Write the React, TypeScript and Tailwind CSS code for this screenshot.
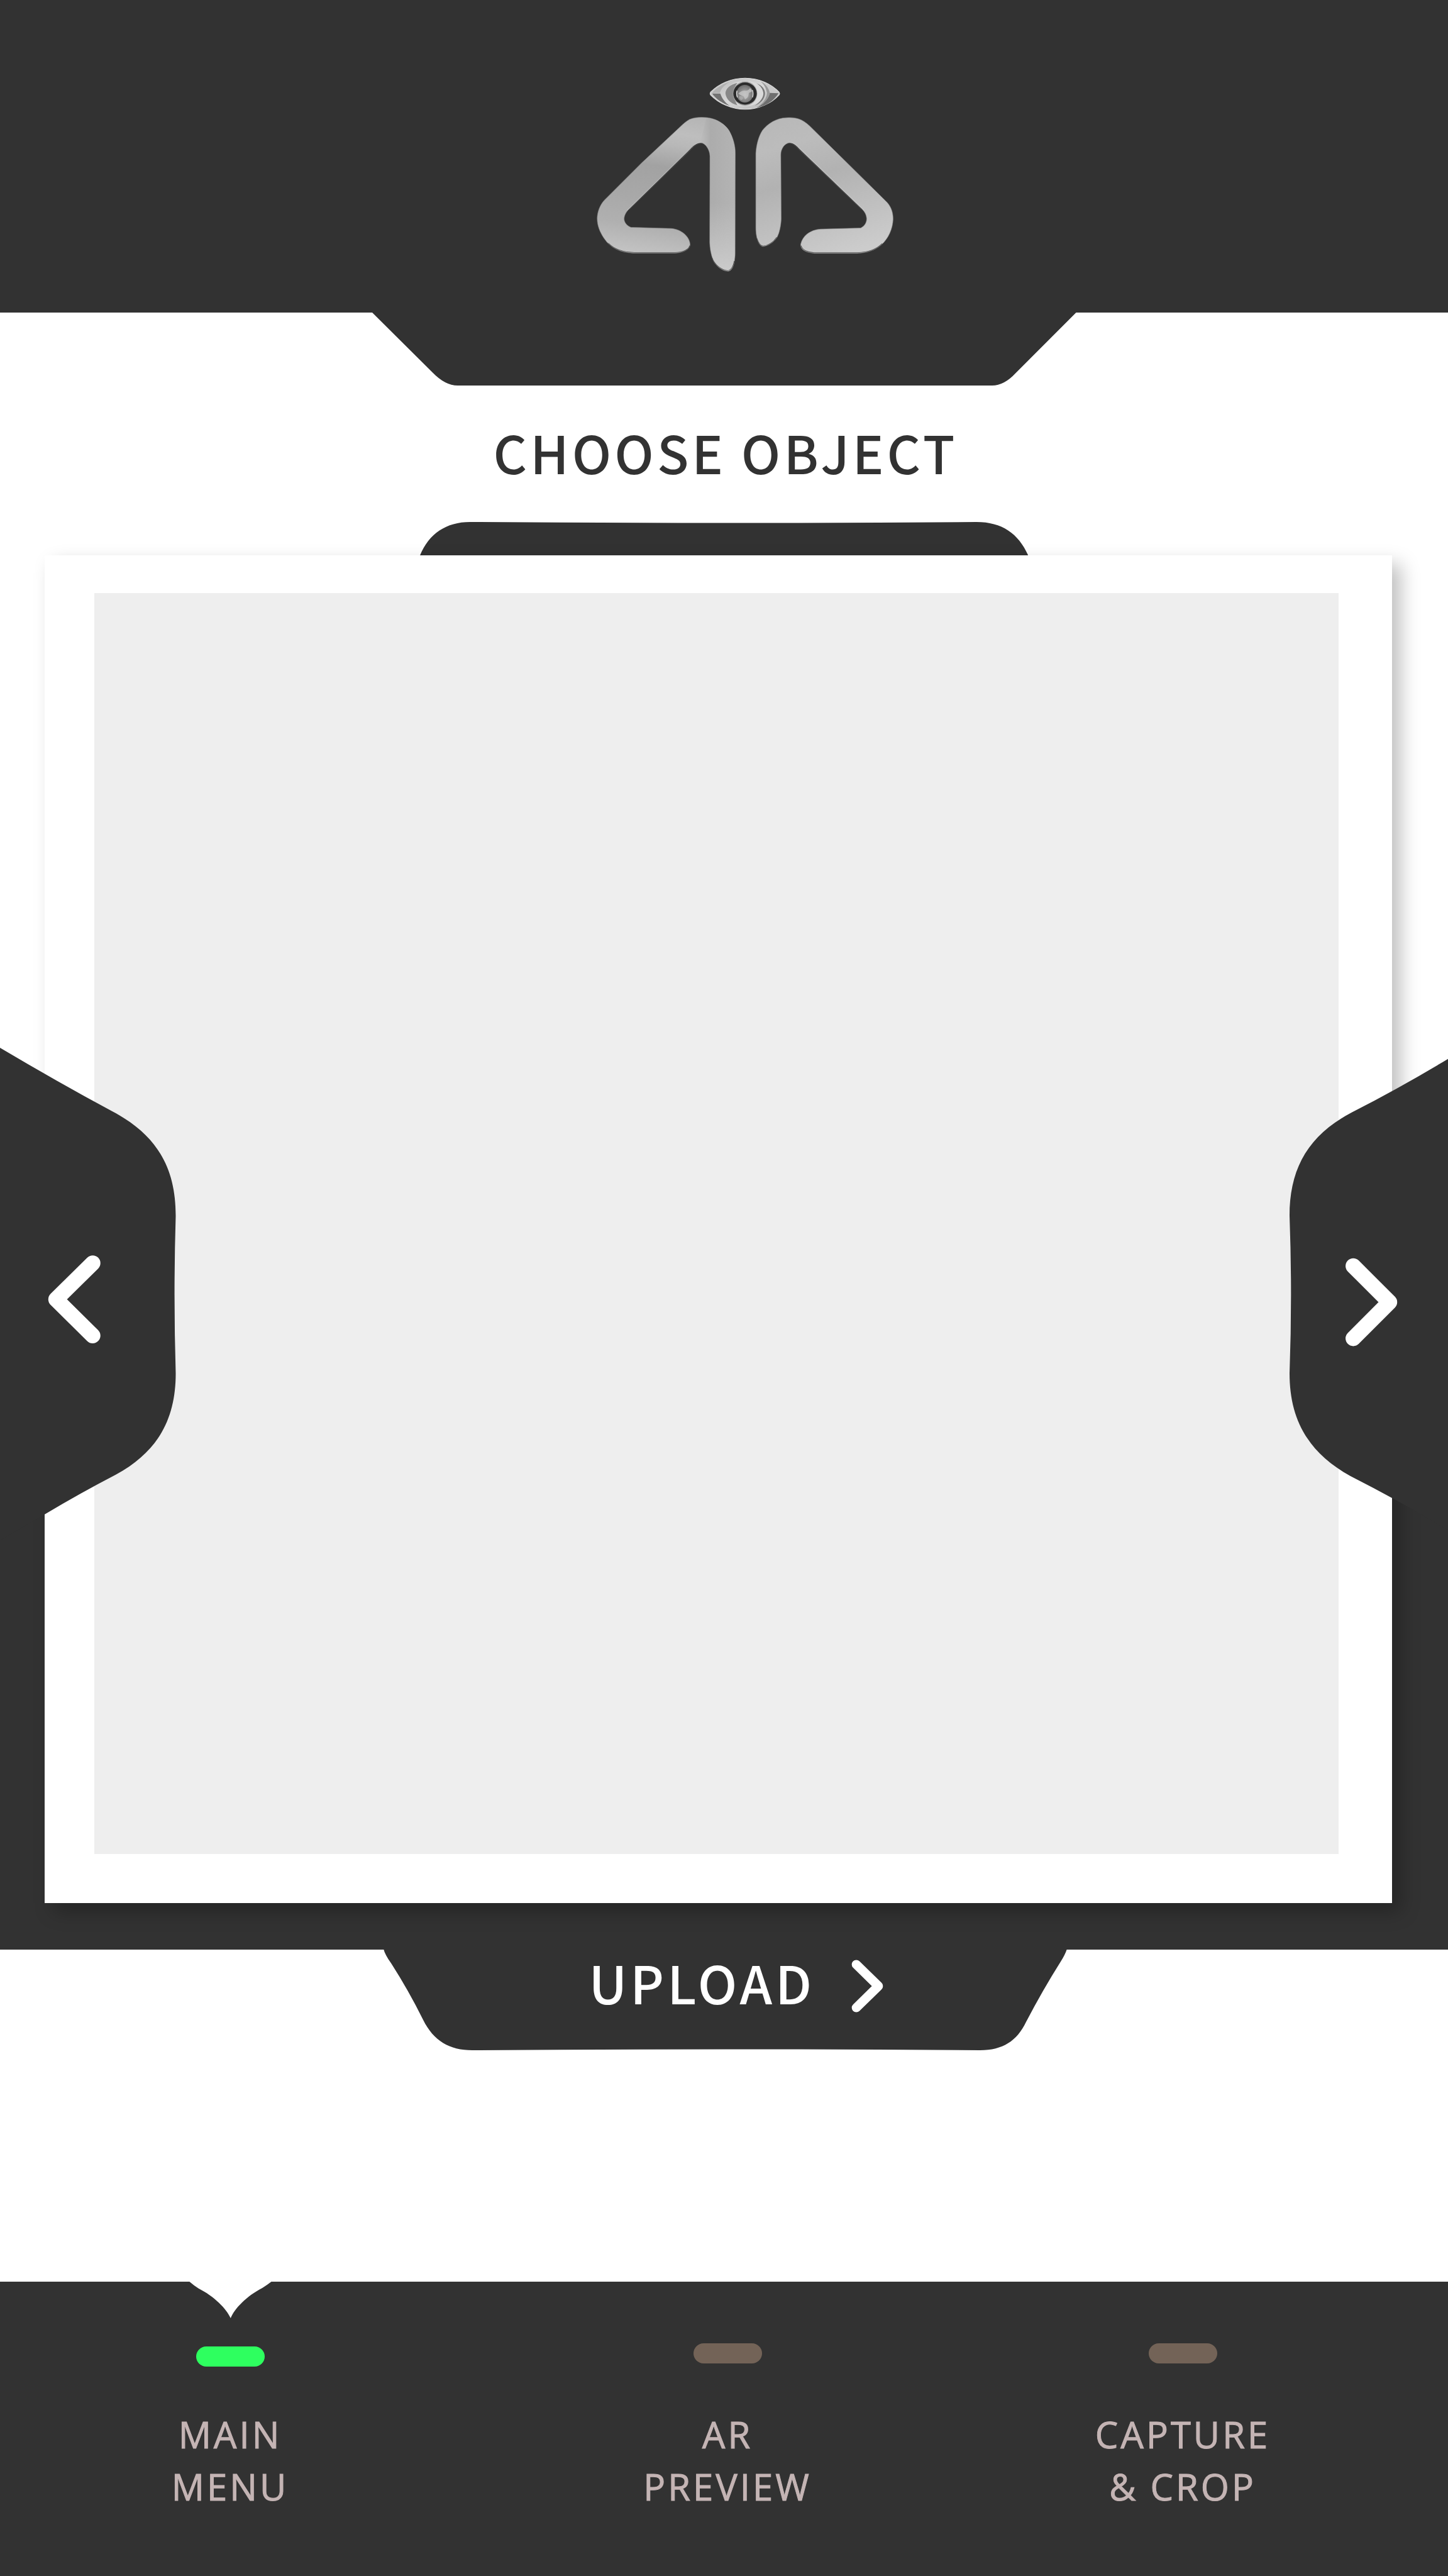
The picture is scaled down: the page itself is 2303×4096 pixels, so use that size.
import React from "react";

const NAV_ITEMS = [
  { lines: ["MAIN", "MENU"], active: true },
  { lines: ["AR", "PREVIEW"], active: false },
  { lines: ["CAPTURE", "& CROP"], active: false },
];

function Logo() {
  return (
    <svg viewBox="36 40 616 402" className="h-[309px] w-[473px] shrink-0" role="img" aria-label="Logo">
      <defs>
        <linearGradient id="left-arm" gradientUnits="userSpaceOnUse" x1="600" y1="370" x2="420" y2="1250">
          <stop offset="0" stopColor="#b4b4b4" />
          <stop offset="0.14" stopColor="#bebebe" />
          <stop offset="0.22" stopColor="#b8b8b8" />
          <stop offset="0.38" stopColor="#a2a2a2" />
          <stop offset="0.6" stopColor="#a8a8a8" />
          <stop offset="0.8" stopColor="#b0b0b0" />
          <stop offset="1" stopColor="#c4c4c4" />
        </linearGradient>
        <linearGradient id="left-stem" gradientUnits="userSpaceOnUse" x1="560" y1="0" x2="724" y2="0">
          <stop offset="0" stopColor="#b0b0b0" stopOpacity="0" />
          <stop offset="0.3" stopColor="#acacac" />
          <stop offset="1" stopColor="#b4b4b4" />
        </linearGradient>
        <linearGradient id="stem-tip" gradientUnits="userSpaceOnUse" x1="0" y1="900" x2="0" y2="1320">
          <stop offset="0" stopColor="#c8c8c8" stopOpacity="0" />
          <stop offset="1" stopColor="#cbcbcb" />
        </linearGradient>
        <linearGradient id="right-arm" gradientUnits="userSpaceOnUse" x1="900" y1="370" x2="1240" y2="1210">
          <stop offset="0" stopColor="#b8b8b8" />
          <stop offset="0.2" stopColor="#bcbcbc" />
          <stop offset="0.45" stopColor="#b2b2b2" />
          <stop offset="0.75" stopColor="#c0c0c0" />
          <stop offset="1" stopColor="#cccccc" />
        </linearGradient>
        <linearGradient id="lid" x1="0" y1="0" x2="1" y2="1">
          <stop offset="0" stopColor="#b8b8b8" />
          <stop offset="0.5" stopColor="#d8d8d8" />
          <stop offset="1" stopColor="#b0b0b0" />
        </linearGradient>
        <radialGradient id="iris" cx="0.5" cy="0.55" r="0.55">
          <stop offset="0" stopColor="#c0c0c0" />
          <stop offset="0.5" stopColor="#929292" />
          <stop offset="1" stopColor="#6c6c6c" />
        </radialGradient>
      </defs>

      <g transform="scale(0.44643 0.33333)" stroke="#8a8a8a" strokeWidth="2">
        <path
          fill="url(#left-arm)"
          d="M512 380 C545 362 590 366 618 376 C655 390 685 425 697 455 C712 492 724 540 724 590 L723 1215 C722 1265 714 1324 688 1324 C660 1320 630 1288 620 1252 C610 1215 606 1180 605 1145 L606 610 C606 570 585 526 562 526 C545 526 525 546 512 568 L232 936 C215 958 208 980 208 1000 C209 1022 222 1042 240 1051 L425 1058 C475 1062 514 1112 514 1160 C512 1190 480 1210 445 1211 L250 1211 C190 1208 145 1180 115 1120 C95 1080 83 1040 83 995 C84 955 95 915 115 884 L290 650 L470 424 C485 405 498 390 512 380 Z"
        />
        <path
          stroke="none"
          fill="url(#left-stem)"
          d="M590 370 C655 382 685 425 697 455 C712 492 722 540 722 590 L721 1215 C720 1265 712 1320 688 1320 C660 1316 630 1284 621 1250 C612 1215 608 1180 607 1145 L608 610 C606 560 585 528 562 524 Z"
        />
        <path
          stroke="none"
          fill="url(#stem-tip)"
          d="M607 900 L722 900 L721 1215 C720 1265 712 1320 688 1320 C660 1316 630 1284 621 1250 C612 1215 608 1180 607 1145 Z"
        />
        <path
          fill="url(#right-arm)"
          d="M850 448 C875 405 915 372 960 370 C1010 366 1035 380 1068 420 L1420 885 C1445 915 1456 955 1456 1000 C1454 1060 1435 1120 1400 1162 C1370 1195 1335 1210 1290 1212 L1090 1212 C1050 1208 1026 1190 1027 1158 C1035 1105 1070 1066 1120 1062 L1306 1055 C1325 1042 1334 1020 1333 995 C1332 975 1325 955 1312 938 L1018 560 C1005 540 992 526 977 526 C952 528 935 565 935 600 L937 1000 C935 1040 930 1080 918 1112 C905 1142 875 1168 852 1170 C830 1166 820 1110 819 1060 L819 590 C822 535 832 485 850 448 Z"
        />
        <path fill="none" stroke="#4a4a4a" strokeWidth="3" d="M232 940 L515 572 C530 546 548 530 564 530 M1310 940 L1018 566 C1005 545 992 530 977 530" />
        <path fill="none" stroke="#dcdcdc" strokeWidth="2" d="M222 946 L508 572 C525 548 545 523 564 523 M1322 946 L1022 560 C1008 540 992 523 977 523" />
        <path fill="none" stroke="#4c4c4c" strokeWidth="3" d="M135 1150 C165 1190 205 1206 255 1207 L445 1207 C480 1206 508 1190 512 1165 M1029 1165 C1034 1192 1060 1207 1090 1208 L1290 1208 C1345 1204 1378 1188 1405 1152 M616 1240 C628 1285 660 1316 688 1320 C704 1318 714 1295 719 1260 M824 1120 C832 1152 840 1166 853 1167 C875 1165 900 1145 916 1112" />
      </g>

      <g transform="translate(240 20) scale(0.33333)">
        <path fill="url(#lid)" stroke="#dedede" strokeWidth="4" d="M95 152 C145 100 225 64 310 64 C395 64 475 100 522 152 Q528 160 522 168 C475 220 395 258 310 258 C225 258 145 220 95 168 Q90 160 95 152 Z" />
        <path fill="#727272" d="M105 160 L156 160 C166 190 188 220 215 236 C170 222 130 195 105 160 Z" />
        <path fill="#b0b0b0" d="M105 156 C135 122 180 98 215 88 C180 108 160 130 154 156 Z" />
        <path fill="#6e6e6e" d="M518 158 L464 156 C454 195 425 228 380 248 C440 238 490 205 518 158 Z" />
        <path fill="#c8c8c8" d="M518 153 L464 153 C458 125 435 98 405 84 C450 96 492 122 518 153 Z" />
        <path fill="#999999" d="M405 84 C435 98 458 125 464 156 C454 195 425 228 380 248 C420 225 445 190 446 156 C440 125 428 102 405 84 Z" />
        <ellipse cx="310" cy="160" rx="122" ry="78" fill="#dadada" />
        <path fill="#888888" d="M262 94 C215 105 190 130 188 158 C192 195 220 222 262 232 C235 190 232 130 262 94 Z" />
        <path fill="#777777" d="M380 96 C415 110 434 132 434 160 C432 195 405 222 370 236 C400 215 423 190 424 160 C423 135 405 110 380 96 Z" />
        <ellipse cx="310" cy="160" rx="76" ry="76" fill="#a8a8a8" />
        <ellipse cx="310" cy="160" rx="73" ry="69" fill="#2b2b2b" />
        <ellipse cx="309" cy="161" rx="52" ry="55" fill="url(#iris)" />
        <path fill="#c6c6c6" d="M268 160 Q290 138 316 142 Q336 140 340 126 Q358 138 350 150 Q330 152 332 166 Q330 186 310 196 L302 178 Q282 172 268 160 Z" opacity="0.8" />
        <path fill="#b0b0b0" d="M272 180 Q288 168 298 186 Q296 200 284 200 Q272 194 272 180 Z" opacity="0.7" />
        <path fill="none" stroke="#e2e2e2" strokeWidth="5" d="M260 142 Q254 162 262 184 M356 138 Q364 162 356 184" />
      </g>
    </svg>
  );
}

function Header() {
  return (
    <header>
      <div className="flex h-[497px] items-start justify-center bg-[#323232] pt-[123px] pl-[68px]">
        <Logo />
      </div>
      <svg viewBox="770 648 1458 152" className="mx-auto -mt-px block h-auto w-[48.7%] fill-[#323232]" aria-hidden="true">
        <path d="M770 648 H2228 L2102 774 Q2078 800 2053 800 H948 Q922 800 896 773 Z" />
      </svg>
    </header>
  );
}

function PreviousButton() {
  return (
    <button type="button" aria-label="Previous object" className="absolute top-[783px] left-0 w-[12.17%]">
      <svg viewBox="0 2170 365 1020" className="block h-auto w-full">
        <path
          fill="#323232"
          d="M0 2170 Q118 2240 233 2302 C328 2352 364 2422 364 2518 Q359 2681 364 2844 C364 2938 328 3006 240 3054 Q165 3093 93 3136 L0 3190 Z"
        />
        <path d="M192 2616 L116 2691 L192 2766" fill="none" stroke="white" strokeWidth="32" strokeLinecap="round" strokeLinejoin="round" />
      </svg>
    </button>
  );
}

function NextButton() {
  return (
    <button type="button" aria-label="Next object" className="absolute top-[783px] -right-px w-[11%]">
      <svg viewBox="2671 2170 330 1020" className="block h-auto w-full">
        <path
          fill="#323232"
          d="M3001 2192 Q2905 2250 2800 2304 C2708 2352 2671 2422 2671 2518 Q2677 2681 2671 2844 C2671 2938 2708 3008 2797 3057 Q2905 3112 3001 3170 Z"
        />
        <path d="M2803 2622 L2878 2697 L2803 2772" fill="none" stroke="white" strokeWidth="32" strokeLinecap="round" strokeLinejoin="round" />
      </svg>
    </button>
  );
}

function ObjectPicker() {
  return (
    <main className="pb-[368px]">
      <h1 className="flex h-[217px] items-center justify-center pb-[5px] pl-[5px] font-['Noto_Sans_CJK_SC',sans-serif] text-[83px] leading-none font-medium tracking-[5px] text-[#323232]">
        CHOOSE OBJECT
      </h1>
      <svg viewBox="871 1081 1261 69" className="mx-auto block h-auto w-[42%] fill-[#323232]" aria-hidden="true">
        <path d="M871 1150 C890 1105 925 1081 975 1081 Q1500 1085 2025 1081 C2078 1081 2112 1105 2132 1150 Z" />
      </svg>
      <section aria-label="Object preview" className="relative pr-[89px] pb-[74px] pl-[71px]">
        <div className="absolute inset-x-0 bottom-0 h-[34%] bg-[#323232]" />
        <div className="relative flex aspect-square bg-white pt-[60px] pr-[85px] pb-[78px] pl-[79px] shadow-[14px_14px_28px_rgba(0,0,0,0.25)]">
          <div className="flex-1 bg-[#eeeeee]" />
        </div>
        <PreviousButton />
        <NextButton />
      </section>
      <button
        type="button"
        className="relative -mt-px ml-[26.5%] flex h-[161px] w-[47.2%] items-start justify-center gap-[58px] pt-[10px] pl-[34px] font-['Noto_Sans_CJK_SC',sans-serif] text-[83px] leading-[84px] font-medium tracking-[5px] text-white"
      >
        <svg viewBox="794 4038 1417 209" preserveAspectRatio="none" className="absolute inset-0 size-full fill-[#323232]" aria-hidden="true">
          <path d="M794 4038 H2211 Q2207 4050 2198 4064 Q2160 4124 2126 4189 C2107 4228 2078 4247 2031 4247 Q1500 4243 978 4247 C931 4247 898 4228 876 4184 Q846 4124 810 4068 Q797 4050 794 4038 Z" />
        </svg>
        <span className="relative">UPLOAD</span>
        <svg viewBox="1763 4059 66 110" className="relative mt-[7px] h-[84px] w-[51px]" aria-hidden="true">
          <path d="M1773 4069 L1819 4114 L1773 4159" fill="none" stroke="white" strokeWidth="19" strokeLinecap="round" strokeLinejoin="round" />
        </svg>
      </button>
    </main>
  );
}

function Footer() {
  return (
    <footer className="grow bg-[#323232] pr-[123px]">
      <nav aria-label="Main" className="grid grid-cols-[732fr_850fr_598fr]">
        {NAV_ITEMS.map(({ lines, active }) => (
          <a
            key={lines[0]}
            href="#"
            aria-current={active ? "page" : undefined}
            className="relative flex flex-col items-center font-['Open_Sans',sans-serif] text-[58px] leading-[83px] font-medium tracking-[4px] text-[#c4b4b4] [-webkit-text-stroke:1px_#c4b4b4]"
          >
            {active && (
              <svg viewBox="390 4726 173 76" className="absolute top-0 h-[58px] w-[133px] fill-white" aria-hidden="true">
                <path d="M390 4725 H563 Q553 4733 543 4739 C510 4756 485 4782 477 4802 C468 4782 442 4756 410 4740 Q399 4733 390 4725 Z" />
              </svg>
            )}
            <span className={active ? "mt-[103px] h-8 w-[109px] rounded-full bg-[#2eff5f]" : "mt-[98px] mb-[5px] h-8 w-[109px] rounded-full bg-[#736357]"} />
            <span className="mt-[66px] text-center">
              {lines[0]}
              <br />
              {lines[1]}
            </span>
          </a>
        ))}
      </nav>
    </footer>
  );
}

export default function App() {
  return (
    <div className="flex min-h-screen flex-col overflow-hidden bg-white">
      <Header />
      <ObjectPicker />
      <Footer />
    </div>
  );
}
